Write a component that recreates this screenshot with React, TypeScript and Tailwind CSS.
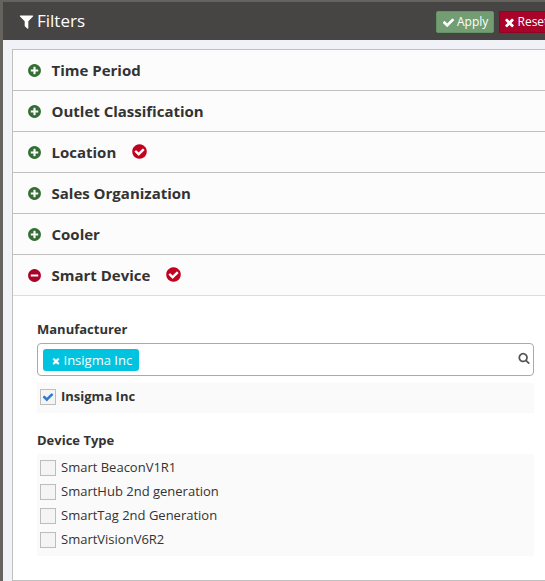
import type { ReactNode } from "react";

const CIRCLE =
  "M1664 896q0 209-103 385.5t-279.5 279.5-385.5 103-385.5-103-279.5-279.5-103-385.5 103-385.5 279.5-279.5 385.5-103 385.5 103 279.5 279.5 103 385.5z";

const PATHS = {
  filter:
    "M1595 295q17 41-14 70l-493 493v742q0 42-39 59-13 5-25 5-27 0-45-19l-256-256q-19-19-19-45v-486l-493-493q-31-29-14-70 17-39 59-39h1280q42 0 59 39z",
  plus:
    "M1344 960v-128q0-26-19-45t-45-19h-256v-256q0-26-19-45t-45-19h-128q-26 0-45 19t-19 45v256h-256q-26 0-45 19t-19 45v128q0 26 19 45t45 19h256v256q0 26 19 45t45 19h128q26 0 45-19t19-45v-256h256q26 0 45-19t19-45z" + CIRCLE,
  minus:
    "M1344 960v-128q0-26-19-45t-45-19h-768q-26 0-45 19t-19 45v128q0 26 19 45t45 19h768q26 0 45-19t19-45z" + CIRCLE,
  checkCircle:
    "M1412 734q0-28-18-46l-91-90q-19-19-45-19t-45 19l-408 407-226-226q-19-19-45-19t-45 19l-91 90q-18 18-18 46 0 27 18 45l362 362q19 19 45 19 27 0 46-19l543-543q18-18 18-45z" + CIRCLE,
  check:
    "M1671 566q0 40-28 68l-724 724-136 136q-28 28-68 28t-68-28l-136-136-362-362q-28-28-28-68t28-68l136-136q28-28 68-28t68 28l294 295 656-657q28-28 68-28t68 28l136 136q28 28 28 68z",
  times:
    "M1490 1322q0 40-28 68l-136 136q-28 28-68 28t-68-28l-294-294-294 294q-28 28-68 28t-68-28l-136-136q-28-28-28-68t28-68l294-294-294-294q-28-28-28-68t28-68l136-136q28-28 68-28t68 28l294 294 294-294q28-28 68-28t68 28l136 136q28 28 28 68t-28 68l-294 294 294 294q28 28 28 68z",
  search:
    "M1216 832q0-185-131.5-316.5t-316.5-131.5-316.5 131.5-131.5 316.5 131.5 316.5 316.5 131.5 316.5-131.5 131.5-316.5zm512 832q0 52-38 90t-90 38q-54 0-90-38l-343-342q-179 124-399 124-143 0-273.5-55.5t-225-150-150-225-55.5-273.5 55.5-273.5 150-225 225-150 273.5-55.5 273.5 55.5 225 150 150 225 55.5 273.5q0 220-124 399l343 343q37 37 37 90z",
};

function Icon({ name, className }: { name: keyof typeof PATHS; className: string }) {
  return (
    <svg viewBox="0 0 1792 1792" fill="currentColor" fillRule="evenodd" className={"shrink-0 " + className}>
      <path d={PATHS[name]} />
    </svg>
  );
}

function Section({ title, open, active }: { title: string; open?: boolean; active?: boolean }) {
  return (
    <div
      className={
        "flex h-[41px] items-center border-b bg-[#fcfcfc] pl-3.5 " +
        (open ? "border-[#dddddd]" : "border-[#c0c0c0]")
      }
    >
      <Icon
        name={open ? "minus" : "plus"}
        className={"mt-px size-[15px] " + (open ? "text-[#a90329]" : "text-[#356e35]")}
      />
      <span className="ml-[9.5px] text-[15px] leading-5 font-bold">{title}</span>
      {active && <Icon name="checkCircle" className="-mt-px ml-[14.5px] size-[17px] text-[#c2001f]" />}
    </div>
  );
}

function Option({ label, checked }: { label: string; checked?: boolean }) {
  return (
    <label className="flex h-6 items-center pl-[3px]">
      <span className="flex size-4 items-center justify-center border border-[#bdbdbd] bg-[#f4f4f4]">
        {checked && <Icon name="check" className="size-3 text-[#2e7bcc]" />}
      </span>
      <span className={"-mt-0.5 ml-[5px] text-[13px] leading-5 " + (checked ? "font-bold" : "")}>{label}</span>
    </label>
  );
}

function Heading({ children }: { children: ReactNode }) {
  return <h3 className="text-[13px] leading-5 font-bold">{children}</h3>;
}

export default function App() {
  return (
    <div className="h-[581px] w-[545px] overflow-hidden border-t-2 border-l-[3px] border-[#66635f] bg-[#f1f2f7] font-['Open_Sans',sans-serif] text-[#333333]">
      <header className="flex h-[38px] items-center bg-[#474544] pl-[14.5px] text-white">
        <Icon name="filter" className="size-[17px]" />
        <h1 className="ml-[2.5px] text-[17px] leading-6">Filters</h1>
        <div className="ml-auto flex shrink-0 gap-[5px] pt-0.5">
          <button className="flex h-[22px] w-[58px] items-center rounded-xs border border-[#659265] bg-[#739e73] pl-[5px] text-xs">
            <Icon name="check" className="size-[13px]" />
            <span className="ml-0.5">Apply</span>
          </button>
          <button className="flex h-[22px] w-[46px] items-center rounded-l-xs border border-r-0 border-[#900323] bg-[#a90329] pl-[3px] text-xs">
            <Icon name="times" className="size-[13px]" />
            <span className="ml-[1.5px]">Reset</span>
          </button>
        </div>
      </header>

      <main className="mt-[9px] ml-[9px] h-[532px] border border-r-0 border-[#c0c0c0] bg-white">
        <Section title="Time Period" />
        <Section title="Outlet Classification" />
        <Section title="Location" active />
        <Section title="Sales Organization" />
        <Section title="Cooler" />
        <Section title="Smart Device" open active />

        <div className="pt-[23px] pr-[11px] pl-6">
          <Heading>Manufacturer</Heading>
          <div className="mt-1 flex h-[33px] items-center rounded border border-[#aaaaaa] pr-[3px] pl-[5px]">
            <span className="mt-px flex h-[22px] w-24 items-center rounded-[3px] bg-[#00c4df] pl-2 text-[13px] text-white">
              <Icon name="times" className="mt-px size-2.5" />
              <span className="ml-[2.5px] pt-px">Insigma Inc</span>
            </span>
            <Icon name="search" className="mb-1 ml-auto size-3 text-[#555555]" />
          </div>
          <div className="mt-[7px] h-[30px] bg-[#fafafa] pt-0.5">
            <Option label="Insigma Inc" checked />
          </div>

          <div className="mt-[17px]">
            <Heading>Device Type</Heading>
          </div>
          <div className="mt-1 h-[102px] bg-[#fafafa] pt-0.5">
            <Option label="Smart BeaconV1R1" />
            <Option label="SmartHub 2nd generation" />
            <Option label="SmartTag 2nd Generation" />
            <Option label="SmartVisionV6R2" />
          </div>
        </div>
      </main>
    </div>
  );
}
